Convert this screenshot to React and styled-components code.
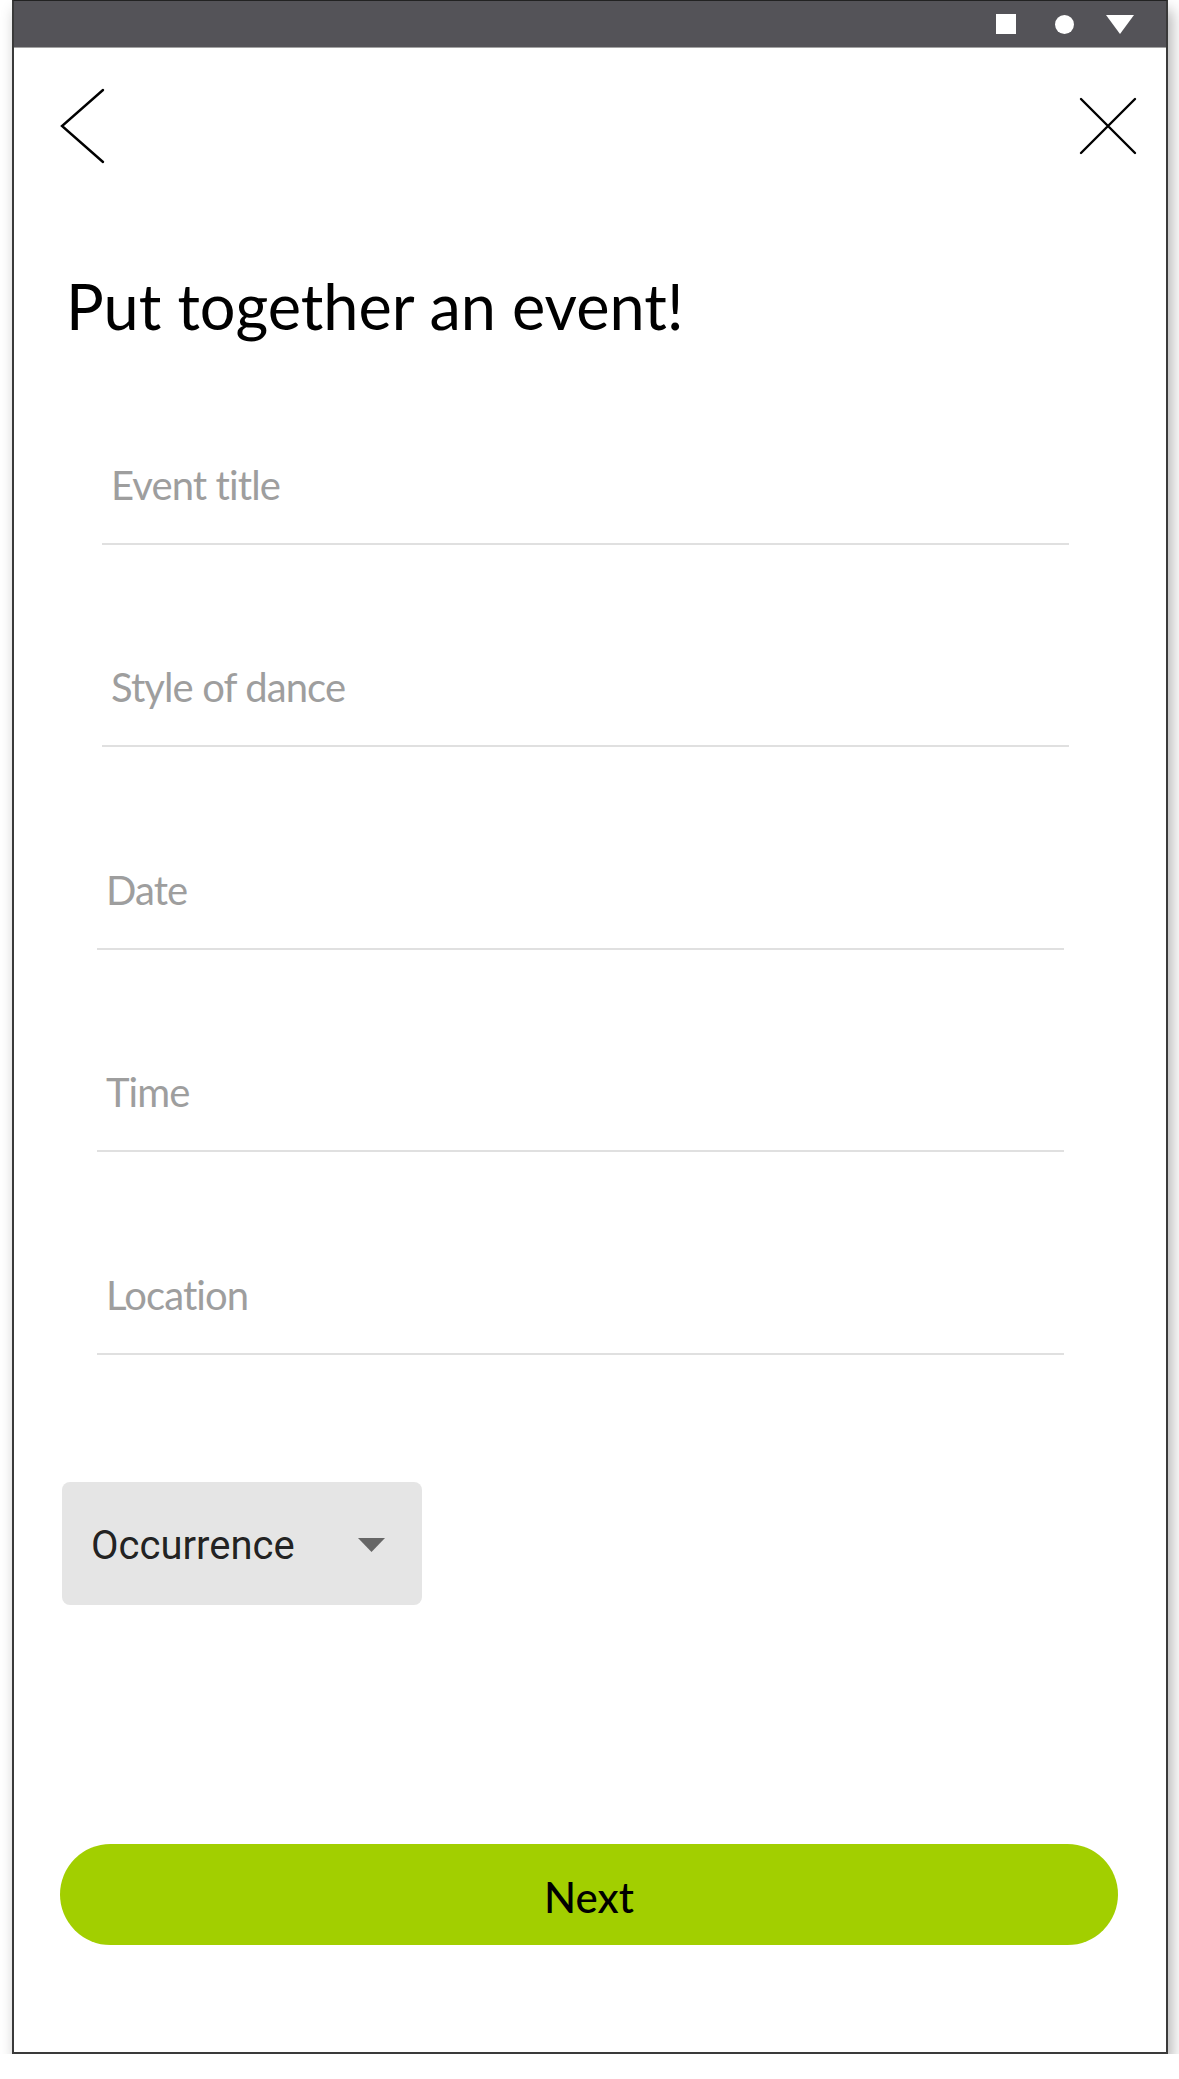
import React from "react"
import styled, { createGlobalStyle } from "styled-components"

const GlobalStyle = createGlobalStyle`
  html, body {
    margin: 0;
    padding: 0;
    background: #ffffff;
  }
  * {
    box-sizing: border-box;
  }
`

const Device = styled.div`
  margin-left: 12px;
  width: 1156px;
  height: 2054px;
  background: #ffffff;
  border: 2px solid #3a3a3a;
  border-top: 1px solid #222222;
  box-shadow: 4px 10px 14px rgba(0, 0, 0, 0.3);
  display: flex;
  flex-direction: column;
`

const StatusBar = styled.div`
  height: 47px;
  flex: 0 0 auto;
  background: #545358;
  border-bottom: 1px solid #a3a3a3;
  display: flex;
  justify-content: flex-end;
  align-items: center;
  padding-right: 32px;
`

const StatusIcon = styled.svg`
  display: block;
  margin-left: ${props => props.$gap}px;
`

const TopBar = styled.div`
  height: 156px;
  display: flex;
  justify-content: space-between;
  align-items: center;
  padding: 0 29px 0 45px;
`

const IconButton = styled.button`
  border: none;
  background: none;
  padding: 0;
  margin: 0;
  display: flex;
  cursor: pointer;
`

const Title = styled.h1`
  margin: 64px 0 0 52px;
  font-family: Lato, "Open Sans", sans-serif;
  font-weight: 400;
  font-size: 63px;
  line-height: 1.2;
  letter-spacing: 0;
  color: #000000;
`

const Form = styled.div`
  margin-top: 117px;
  display: flex;
  flex-direction: column;
  gap: 118.5px;
`

const Field = styled.label`
  display: block;
  margin-left: ${props => props.$left}px;
  width: 967px;
  height: 84px;
  padding: 0 0 0 ${props => props.$indent}px;
  border-bottom: 2px solid #e0e0e0;
`

const Placeholder = styled.span`
  display: block;
  font-family: Lato, "Open Sans", sans-serif;
  font-weight: 400;
  font-size: 40px;
  line-height: 1.2;
  letter-spacing: -0.9px;
  color: #9e9e9e;
`

const Select = styled.div`
  margin: 127px 0 0 48px;
  width: 360px;
  height: 123px;
  border-radius: 8px;
  background: #e5e5e5;
  display: flex;
  align-items: center;
  justify-content: space-between;
  padding: 4px 37px 0 29px;
  font-family: Roboto, "Noto Sans", sans-serif;
  font-size: 40px;
  color: rgba(0, 0, 0, 0.87);
`

const NextButton = styled.button`
  margin: 239px 0 0 46px;
  width: 1058px;
  height: 101px;
  padding: 5px 0 0;
  border: none;
  border-radius: 51px;
  background: #a2cf00;
  font-family: Lato, "Open Sans", sans-serif;
  font-weight: 500;
  font-size: 42px;
  color: #000000;
  cursor: pointer;
`

const fields = [
  { label: "Event title", left: 88, indent: 9 },
  { label: "Style of dance", left: 88, indent: 9 },
  { label: "Date", left: 83, indent: 9 },
  { label: "Time", left: 83, indent: 9 },
  { label: "Location", left: 83, indent: 9 },
]

export default function App() {
  return (
    <>
      <GlobalStyle />
      <Device>
        <StatusBar>
          <StatusIcon width="20" height="20" viewBox="0 0 20 20" $gap={0}>
            <rect x="0" y="0" width="20" height="20" fill="#ffffff" />
          </StatusIcon>
          <StatusIcon width="19" height="19" viewBox="0 0 19 19" $gap={39}>
            <circle cx="9.5" cy="9.5" r="9.5" fill="#ffffff" />
          </StatusIcon>
          <StatusIcon width="28" height="19" viewBox="0 0 28 19" $gap={32}>
            <polygon points="0,0 28,0 14,19" fill="#ffffff" />
          </StatusIcon>
        </StatusBar>

        <TopBar>
          <IconButton aria-label="Back">
            <svg width="46" height="76" viewBox="0 0 46 76">
              <polyline
                points="44,2 3,38 44,74"
                fill="none"
                stroke="#000"
                strokeWidth="2.4"
                strokeLinecap="round"
                strokeLinejoin="miter"
              />
            </svg>
          </IconButton>
          <IconButton aria-label="Close">
            <svg width="58" height="58" viewBox="0 0 58 58">
              <path
                d="M2 2 L56 56 M56 2 L2 56"
                fill="none"
                stroke="#000"
                strokeWidth="2.4"
                strokeLinecap="round"
              />
            </svg>
          </IconButton>
        </TopBar>

        <Title>Put together an event!</Title>

        <Form>
          {fields.map(f => (
            <Field key={f.label} $left={f.left} $indent={f.indent}>
              <Placeholder>{f.label}</Placeholder>
            </Field>
          ))}
        </Form>

        <Select>
          <span>Occurrence</span>
          <svg width="27" height="14" viewBox="0 0 27 14">
            <polygon points="0,0 27,0 13.5,14" fill="#666666" />
          </svg>
        </Select>

        <NextButton>Next</NextButton>
      </Device>
    </>
  )
}
